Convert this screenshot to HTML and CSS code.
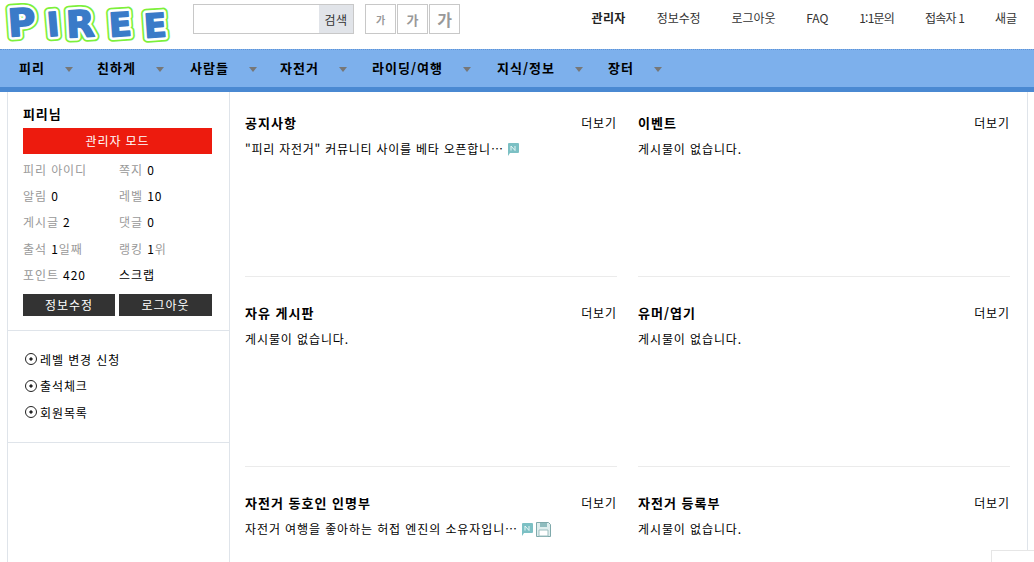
FILE: index.html
```html
<!DOCTYPE html>
<html lang="ko">
<head>
    <meta charset="utf-8">
    <title>PIREE</title>
    <link rel="stylesheet" href="styles.css">
</head>
<body>
    <header class="top">
        <svg class="logo" width="193" height="47" viewBox="0 0 193 47" role="img" aria-label="PIREE">
            <defs>
                <g id="logo-word">
                    <text x="8" y="35" font-size="38" transform="rotate(-4 20 24)">P</text>
                    <text x="47" y="35" font-size="33" transform="rotate(-5 54 24)">I</text>
                    <text x="66" y="36" font-size="37" transform="rotate(-3 82 24)">R</text>
                    <text x="109" y="35" font-size="33" transform="rotate(-4 122 24)">E</text>
                    <text x="144" y="36" font-size="33" transform="rotate(-4 157 24)">E</text>
                </g>
            </defs>
            <use href="#logo-word" class="logo-green"/>
            <use href="#logo-word" class="logo-white"/>
            <use href="#logo-word" class="logo-blue"/>
        </svg>
        <form class="search">
            <input class="search-input" type="text">
            <button class="search-btn" type="button">검색</button>
        </form>
        <div class="font-size">
            <button class="fs fs-s" type="button">가</button>
            <button class="fs fs-m" type="button">가</button>
            <button class="fs fs-l" type="button">가</button>
        </div>
        <ul class="util">
            <li class="admin">관리자</li>
            <li>정보수정</li>
            <li>로그아웃</li>
            <li>FAQ</li>
            <li class="tight">1:1문의</li>
            <li class="tight">접속자 1</li>
            <li>새글</li>
        </ul>
    </header>

    <nav class="gnb">
        <a class="gnb-item w-piri">피리</a>
        <a class="gnb-item w-chin">친하게</a>
        <a class="gnb-item w-saram">사람들</a>
        <a class="gnb-item w-bike">자전거</a>
        <a class="gnb-item w-ride">라이딩/여행</a>
        <a class="gnb-item w-know">지식/정보</a>
        <a class="gnb-item">장터</a>
    </nav>

    <div class="wrap">
        <aside class="side">
            <section class="profile">
                <h3 class="nick">피리님</h3>
                <a class="admin-btn">관리자 모드</a>
                <ul class="stats">
                    <li>피리 아이디</li>
                    <li>쪽지 <b>0</b></li>
                    <li>알림 <b>0</b></li>
                    <li>레벨 <b>10</b></li>
                    <li>게시글 <b>2</b></li>
                    <li>댓글 <b>0</b></li>
                    <li>출석 <b>1</b>일째</li>
                    <li>랭킹 <b>1</b>위</li>
                    <li>포인트 <b>420</b></li>
                    <li><b>스크랩</b></li>
                </ul>
                <div class="side-btns">
                    <a class="dark-btn">정보수정</a>
                    <a class="dark-btn">로그아웃</a>
                </div>
            </section>
            <ul class="side-menu">
                <li>레벨 변경 신청</li>
                <li>출석체크</li>
                <li>회원목록</li>
            </ul>
        </aside>

        <main class="boards">
            <section class="board">
                <div class="board-head"><h4>공지사항</h4><a>더보기</a></div>
                <p class="post post-tight">"피리 자전거" 커뮤니티 사이를 베타 오픈합니…
                    <svg class="ico" width="12" height="13" viewBox="0 0 12 13"><path class="ico-new" d="M2 0h9a1 1 0 0 1 1 1v8a1 1 0 0 1-1 1H3l-2 3V1a1 1 0 0 1 1-1z"/><path class="ico-n" d="M4 7.500V3l4 4.500V3"/></svg>
                </p>
            </section>
            <section class="board">
                <div class="board-head"><h4>이벤트</h4><a>더보기</a></div>
                <p class="post">게시물이 없습니다.</p>
            </section>
            <section class="board">
                <div class="board-head"><h4>자유 게시판</h4><a>더보기</a></div>
                <p class="post">게시물이 없습니다.</p>
            </section>
            <section class="board">
                <div class="board-head"><h4>유머/엽기</h4><a>더보기</a></div>
                <p class="post">게시물이 없습니다.</p>
            </section>
            <section class="board">
                <div class="board-head"><h4>자전거 동호인 인명부</h4><a>더보기</a></div>
                <p class="post">자전거 여행을 좋아하는 허접 엔진의 소유자입니…
                    <svg class="ico" width="12" height="13" viewBox="0 0 12 13"><path class="ico-new" d="M2 0h9a1 1 0 0 1 1 1v8a1 1 0 0 1-1 1H3l-2 3V1a1 1 0 0 1 1-1z"/><path class="ico-n" d="M4 7.500V3l4 4.500V3"/></svg>
                    <svg class="ico" width="15" height="15" viewBox="0 0 15 15"><path d="M.5.5h12l2 2v12H.5z" fill="#dfeeee" stroke="#7fa9ab"/><path d="M4 1h7v4H4z" fill="#8fbcbe"/><path d="M3 8h9v6H3z" fill="#fff" stroke="#9dbfc0"/></svg>
                </p>
            </section>
            <section class="board">
                <div class="board-head"><h4>자전거 등록부</h4><a>더보기</a></div>
                <p class="post">게시물이 없습니다.</p>
            </section>
        </main>
    </div>
    <div class="top-box"></div>
</body>
</html>
```

FILE: styles.css
```css
* {
    box-sizing: border-box;
}
html, body {
    height: 562px;
    overflow: hidden;
}
body {
    margin: 0;
    font-family: "Noto Sans CJK KR", "Liberation Sans", sans-serif;
    font-size: 12px;
    letter-spacing: 0.9px;
    color: #000;
    background: #fff;
}
ul {
    list-style: none;
    margin: 0;
    padding: 0;
}

/* top */
.top {
    display: flex;
    align-items: flex-start;
    height: 49px;
}
.logo {
    flex: none;
    margin-top: 1px;
}
.logo text {
    font-family: "DejaVu Sans", sans-serif;
    font-weight: 700;
    letter-spacing: 0;
}
.logo-green {
    fill: #7df03a;
    stroke: #7df03a;
    stroke-width: 10;
    stroke-linejoin: round;
}
.logo-white {
    fill: #fff;
    stroke: #fff;
    stroke-width: 6.5;
    stroke-linejoin: round;
}
.logo-blue {
    fill: #3a7bc8;
    stroke: #3a7bc8;
    stroke-width: 1.5;
    stroke-linejoin: round;
}
.search {
    display: flex;
    flex: none;
    width: 161px;
    height: 30px;
    margin-top: 4px;
    border: 1px solid #c8c8c8;
}
.search-input {
    flex: 1;
    min-width: 0;
    border: 0;
    padding: 0;
}
.search-btn {
    width: 34px;
    border: 0;
    padding: 0;
    background: #e1e4e9;
    color: #333;
    font: 12px "Noto Sans CJK KR", sans-serif;
    letter-spacing: 0.5px;
}
.font-size {
    display: flex;
    flex: none;
    gap: 1px;
    margin: 4px 0 0 11px;
}
.fs {
    width: 31px;
    height: 30px;
    border: 1px solid #c8c8c8;
    padding: 0;
    background: #fff;
    color: #999;
    font-family: "Noto Sans CJK KR", sans-serif;
    font-weight: 700;
}
.fs-s { font-size: 10px; }
.fs-m { font-size: 13px; }
.fs-l { font-size: 16px; }
.util {
    display: flex;
    flex: 1;
    justify-content: flex-end;
    gap: 31px;
    padding: 9px 17px 0 0;
    color: #333;
    line-height: 18px;
    letter-spacing: -0.1px;
}
.util .admin {
    font-weight: 700;
    color: #222;
    letter-spacing: 0.4px;
}
.util .tight {
    letter-spacing: -0.8px;
}

/* gnb */
.gnb {
    display: flex;
    align-items: center;
    height: 43px;
    padding: 0 0 5px 19px;
    background: #7db0ec;
    border-top: 1px dotted #5f93d6;
    border-bottom: 5px solid #4a89d2;
}
.gnb-item {
    display: flex;
    align-items: center;
    font-size: 13px;
    font-weight: 700;
    color: #000;
    letter-spacing: 1px;
    margin-top: 3px;
}
.gnb-item::after {
    content: "";
    margin: 4px 0 0 20px;
    border: 4px solid transparent;
    border-top: 5px solid #777;
    border-bottom: 0;
}
.w-piri { width: 78px; }
.w-chin { width: 93px; }
.w-saram { width: 90px; }
.w-bike { width: 92px; }
.w-ride { width: 125px; }
.w-know { width: 111px; }

/* layout */
.wrap {
    display: flex;
    width: 1021px;
    margin-left: 7px;
    height: 470px;
    border-left: 1px solid #dfe4ea;
    border-right: 1px solid #dfe4ea;
}
.side {
    flex: none;
    width: 222px;
    border-right: 1px solid #dfe4ea;
}
.profile {
    height: 239px;
    padding: 13px 17px 0 15px;
    border-bottom: 1px solid #dfe4ea;
}
.nick {
    margin: 0 0 5px;
    font-size: 13px;
    line-height: 18px;
    font-weight: 700;
}
.admin-btn {
    display: block;
    height: 26px;
    background: #ed1b0e;
    color: #fff;
    text-align: center;
    line-height: 26px;
    font-size: 12px;
}
.stats {
    display: grid;
    grid-template-columns: 96px 1fr;
    grid-auto-rows: 26.3px;
    align-items: center;
    margin-top: 2px;
    color: #999;
}
.stats b {
    font-weight: 400;
    color: #000;
}
.side-btns {
    display: flex;
    gap: 4px;
    margin-top: 7px;
}
.dark-btn {
    flex: 1;
    height: 22px;
    background: #333;
    color: #fff;
    text-align: center;
    line-height: 22px;
}
.dark-btn:first-child {
    flex: none;
    width: 92px;
}
.side-menu {
    height: 112px;
    padding: 15px 0 0 17px;
    border-bottom: 1px solid #dfe4ea;
}
.side-menu li {
    display: flex;
    align-items: center;
    gap: 2px;
    height: 26.6px;
}
.side-menu li::before {
    content: "";
    width: 10px;
    height: 10px;
    margin-right: 1px;
    border: 1px solid #222;
    border-radius: 50%;
    background: radial-gradient(circle, #222 1.4px, #fff 1.8px);
}

/* boards */
.boards {
    flex: 1;
    display: grid;
    grid-template-columns: 372px 372px;
    grid-template-rows: 190px 190px 1fr;
    column-gap: 21px;
    padding: 19px 0 0 15px;
}
.board {
    height: 166px;
    border-bottom: 1px solid #ebebeb;
}
.board:nth-last-child(-n+2) {
    height: auto;
    border-bottom: 0;
}
.board-head {
    display: flex;
    justify-content: space-between;
    align-items: center;
    height: 22px;
}
.board-head h4 {
    margin: 0;
    font-size: 13px;
    font-weight: 700;
    letter-spacing: 1px;
}
.post {
    display: flex;
    align-items: center;
    gap: 3px;
    margin: 7px 0 0;
    line-height: 18px;
}
.post-tight {
    letter-spacing: 0.76px;
}
.ico {
    flex: none;
}
.ico-new {
    fill: #7cc0c4;
}
.ico-n {
    fill: none;
    stroke: #e8f6f6;
    stroke-width: 1;
}
.top-box {
    position: absolute;
    left: 991px;
    top: 550px;
    width: 43px;
    height: 12px;
    background: #fff;
    border: 1px solid #e6e6e6;
    border-bottom: 0;
    border-right: 0;
}
```
